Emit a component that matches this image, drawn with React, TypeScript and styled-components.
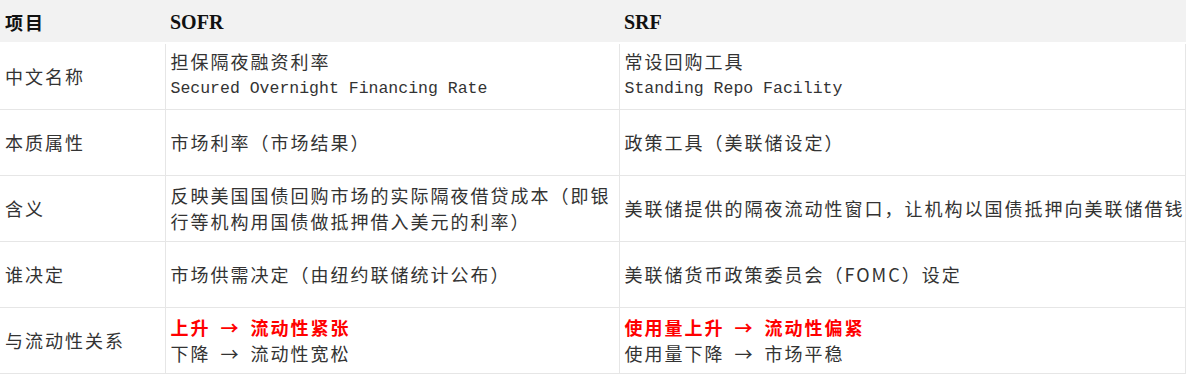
import React from 'react';
import styled, {createGlobalStyle} from 'styled-components';

type Part = {text: string; hot?: boolean};
type Row = {
    label: string
    sofr: Part[][]
    srf: Part[][]
    monoSecond?: boolean
}

const rows: Row[] = [
    {
        label: '中文名称',
        sofr: [[{text: '担保隔夜融资利率'}], [{text: 'Secured Overnight Financing Rate'}]],
        srf: [[{text: '常设回购工具'}], [{text: 'Standing Repo Facility'}]],
        monoSecond: true,
    },
    {
        label: '本质属性',
        sofr: [[{text: '市场利率（市场结果）'}]],
        srf: [[{text: '政策工具（美联储设定）'}]],
    },
    {
        label: '含义',
        sofr: [[{text: '反映美国国债回购市场的实际隔夜借贷成本（即银'}], [{text: '行等机构用国债做抵押借入美元的利率）'}]],
        srf: [[{text: '美联储提供的隔夜流动性窗口，让机构以国债抵押向美联储借钱'}]],
    },
    {
        label: '谁决定',
        sofr: [[{text: '市场供需决定（由纽约联储统计公布）'}]],
        srf: [[{text: '美联储货币政策委员会（FOMC）设定'}]],
    },
    {
        label: '与流动性关系',
        sofr: [[{text: '上升→流动性紧张', hot: true}], [{text: '下降→流动性宽松'}]],
        srf: [[{text: '使用量上升→流动性偏紧', hot: true}], [{text: '使用量下降→市场平稳'}]],
    },
];

const GlobalStyle = createGlobalStyle`
    body {
        margin: 0;
        background: #ffffff;
        font-family: "Noto Sans CJK SC", "Noto Sans", sans-serif;
    }
`;

// splits "a→b" so the arrow gets its own wide gap like the source sheet
const renderText = (text: string) => {
    const bits = text.split('→');
    return bits.map((bit, i) => (
        <React.Fragment key={i}>
            {i > 0 && <Arrow>→</Arrow>}
            {bit}
        </React.Fragment>
    ));
};

export default function App() {
    return (
        <>
            <GlobalStyle/>
            <Table>
                <colgroup>
                    <col style={{width: 165}}/>
                    <col style={{width: 454}}/>
                    <col/>
                </colgroup>
                <thead>
                <tr>
                    <HeadCell>项目</HeadCell>
                    <HeadCell $latin>SOFR</HeadCell>
                    <HeadCell $latin>SRF</HeadCell>
                </tr>
                </thead>
                <tbody>
                {rows.map((row) => (
                    <tr key={row.label}>
                        <Cell>{row.label}</Cell>
                        {[row.sofr, row.srf].map((lines, ci) => (
                            <Cell key={ci}>
                                {lines.map((parts, li) => (
                                    <Line key={li} $mono={row.monoSecond && li === 1}>
                                        {parts.map((p, pi) => (
                                            <Segment key={pi} $hot={p.hot}>{renderText(p.text)}</Segment>
                                        ))}
                                    </Line>
                                ))}
                            </Cell>
                        ))}
                    </tr>
                ))}
                </tbody>
            </Table>
        </>
    );
}

const Table = styled.table`
    width: 1186px;
    border-collapse: collapse;
    table-layout: fixed;
    color: #333333;

    tbody tr {
        height: 66px;
    }
`;

const HeadCell = styled.th<{ $latin?: boolean }>`
    height: 40px;
    padding: 2px 5px 0;
    text-align: left;
    background: #f2f2f2;
    color: #111111;
    font-family: ${p => p.$latin ? '"Liberation Serif", serif' : '"Noto Sans CJK SC", sans-serif'};
    font-size: ${p => p.$latin ? '20px' : '18px'};
    font-weight: 700;
    letter-spacing: ${p => p.$latin ? '0' : '2px'};
    border-bottom: 2px solid #ffffff;
`;

const Cell = styled.td`
    padding: 0 5px;
    vertical-align: middle;
    border: 1px solid #e6e6e6;
    font-size: 18px;
    letter-spacing: 2px;
    line-height: 26px;

    &:first-child {
        border-left: none;
    }
`;

const Line = styled.div<{ $mono?: boolean }>`
    white-space: nowrap;
    font-family: ${p => p.$mono ? '"Liberation Mono", monospace' : 'inherit'};
    font-size: ${p => p.$mono ? '16.5px' : '18px'};
    letter-spacing: ${p => p.$mono ? '0' : '2px'};
    line-height: ${p => p.$mono ? '30px' : '26px'};
`;

const Segment = styled.span<{ $hot?: boolean }>`
    color: ${p => p.$hot ? '#ff0000' : 'inherit'};
    font-weight: ${p => p.$hot ? 700 : 400};
`;

const Arrow = styled.span`
    display: inline-block;
    margin: 0 12px 0 10px;
    letter-spacing: 0;
`;
